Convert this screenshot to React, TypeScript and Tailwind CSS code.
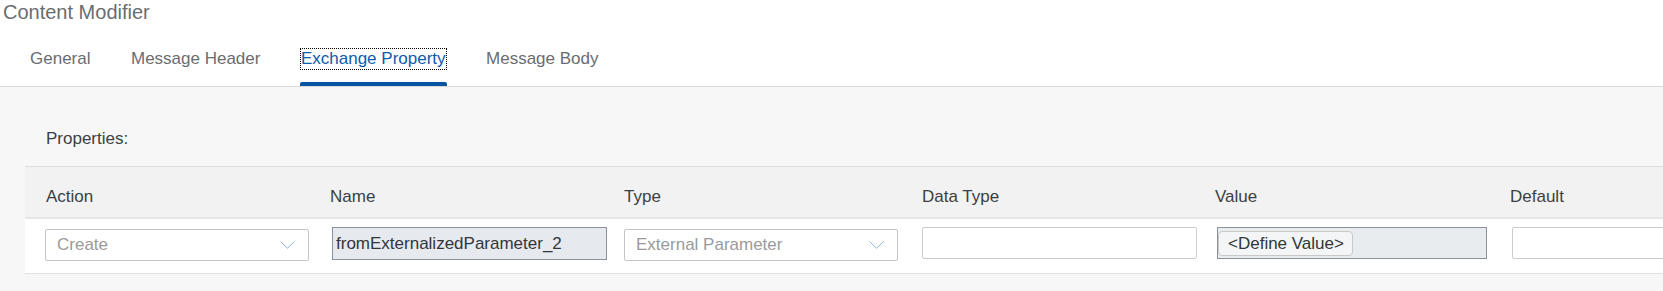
import React from "react";

function Chevron() {
  return (
    <svg width="15" height="8" viewBox="0 0 15 8" className="shrink-0">
      <polyline points="0.5,0.5 7.5,7.2 14.5,0.5" fill="none" stroke="#8db3da" strokeWidth="1" />
    </svg>
  );
}

function Select({ text, width }: { text: string; width: number }) {
  return (
    <div
      className="flex h-[32px] items-center justify-between rounded-[2px] border border-[#c4c4c4] bg-white pl-[11px] pr-[13px]"
      style={{ width }}
    >
      <span className="text-[17px] leading-[20px] text-[#9b9b9b]">{text}</span>
      <Chevron />
    </div>
  );
}

export default function App() {
  const tabs = ["General", "Message Header", "Exchange Property", "Message Body"];
  const active = 2;
  const cols = [
    { w: 295, lp: 21, ip: 20 },
    { w: 294, lp: 10, ip: 12 },
    { w: 296, lp: 10, ip: 10 },
    { w: 293, lp: 12, ip: 12 },
    { w: 295, lp: 12, ip: 14 },
    { w: 300, lp: 12, ip: 14 },
  ];
  const labels = ["Action", "Name", "Type", "Data Type", "Value", "Default"];

  return (
    <div className="w-[1663px] h-[291px] overflow-hidden bg-white font-['Liberation_Sans',Arial,sans-serif]">
      <div className="pl-[3px] text-[20px] leading-[24px] text-[#6a6d70]">Content Modifier</div>

      <div className="flex gap-[38.5px] pl-[29px] border-b border-[#d9d9d9]">
        {tabs.map((t, i) => (
          <div key={t} className="flex flex-col pt-[24px]">
            <span
              className={
                i === active
                  ? "border border-dotted border-black text-[17px] leading-[20px] text-[#0b5cad] whitespace-nowrap"
                  : "border border-transparent text-[17px] leading-[20px] text-[#6a6d70] whitespace-nowrap"
              }
            >
              {t}
            </span>
            <div
              className={
                i === active
                  ? "mt-[12px] h-[4px] rounded-t-[2px] bg-[#0854a0]"
                  : "mt-[12px] h-[4px]"
              }
            />
          </div>
        ))}
      </div>

      <div className="bg-[#f7f7f7] pt-[42px] pb-[17px]">
        <div className="pl-[46px] text-[17px] leading-[20px] text-[#3c3f43]">Properties:</div>
        <div className="ml-[25px] mt-[17px] overflow-hidden">
          <div className="flex w-max border-t border-[#dcdcdc] bg-[#f2f2f2]">
            {cols.map((c, i) => (
              <div
                key={i}
                className="h-[50px] pt-[20px] text-[17px] leading-[20px] text-[#3c3f43]"
                style={{ width: c.w, paddingLeft: c.lp }}
              >
                {labels[i]}
              </div>
            ))}
          </div>
          <div className="flex w-max border-t-2 border-b border-t-[#e6e6e6] border-b-[#e0e0e0] bg-white">
            <div className="h-[54px] pt-[10px]" style={{ width: cols[0].w, paddingLeft: cols[0].ip }}>
              <Select text="Create" width={264} />
            </div>
            <div className="h-[54px] pt-[8px]" style={{ width: cols[1].w, paddingLeft: cols[1].ip }}>
              <div className="flex h-[33px] w-[275px] items-center border border-[#89919a] bg-[#e6eaee] pl-[3px]">
                <span className="text-[17px] leading-[20px] text-[#32363a] whitespace-nowrap">
                  fromExternalizedParameter_2
                </span>
              </div>
            </div>
            <div className="h-[54px] pt-[10px]" style={{ width: cols[2].w, paddingLeft: cols[2].ip }}>
              <Select text="External Parameter" width={274} />
            </div>
            <div className="h-[54px] pt-[8px]" style={{ width: cols[3].w, paddingLeft: cols[3].ip }}>
              <div className="h-[32px] w-[275px] rounded-[2px] border border-[#cccccc] bg-white" />
            </div>
            <div className="h-[54px] pt-[8px]" style={{ width: cols[4].w, paddingLeft: cols[4].ip }}>
              <div className="flex h-[32px] w-[270px] items-start border border-[#89919a] bg-[#e8ecef] pt-[3px]">
                <div className="flex h-[25px] items-center rounded-[4px] border border-[#c8c8c8] bg-[#f4f5f6] pl-[9px] pr-[8px]">
                  <span className="text-[17px] leading-[20px] text-[#32363a] whitespace-nowrap">&lt;Define Value&gt;</span>
                </div>
              </div>
            </div>
            <div className="h-[54px] pt-[8px]" style={{ width: cols[5].w, paddingLeft: cols[5].ip }}>
              <div className="h-[32px] w-[275px] rounded-[2px] border border-[#cccccc] bg-white" />
            </div>
          </div>
        </div>
      </div>
    </div>
  );
}
